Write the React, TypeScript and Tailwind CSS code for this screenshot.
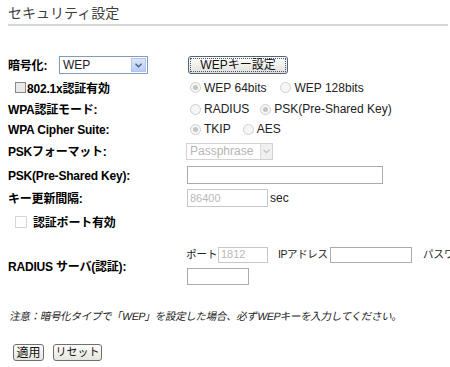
import React from "react";

const FONT = "font-['Liberation_Sans','Noto_Sans_CJK_JP',sans-serif]";

function Radio({ checked, label }: { checked?: boolean; label: string }) {
  return (
    <span className="flex items-center">
      <span className="w-[11px] h-[11px] rounded-full border border-[#cfcfcf] bg-[#f6f6f6] flex items-center justify-center">
        {checked && <span className="w-[5px] h-[5px] rounded-full bg-[#c4c4c4]" />}
      </span>
      <span className="ml-[3px] text-[12px] text-[#222]">{label}</span>
    </span>
  );
}

function Check({ faded }: { faded?: boolean }) {
  return (
    <span
      className={
        faded
          ? "w-[12px] h-[12px] border border-[#d6d6d6] bg-white"
          : "w-[11px] h-[11px] border border-[#8a8a8a] bg-[#e9e9e9]"
      }
    />
  );
}

function Arrow({ disabled }: { disabled?: boolean }) {
  return (
    <span
      className={
        disabled
          ? "w-[12px] h-full border-l border-[#dcdcdc] bg-[#f0f0f0] flex items-center justify-center"
          : "w-[15px] h-full bg-gradient-to-b from-[#dbe6fb] to-[#b7cbf4] border border-[#b0c4ec] flex items-center justify-center"
      }
    >
      <svg width="7" height="5" viewBox="0 0 7 5">
        <path d="M0.5 0.8 L3.5 3.8 L6.5 0.8" fill="none" stroke={disabled ? "#c8c8c8" : "#4d6185"} strokeWidth="1.4" />
      </svg>
    </span>
  );
}

function Label({ children }: { children: React.ReactNode }) {
  return <span className="text-[12px] font-bold text-black tracking-[-0.2px] whitespace-nowrap">{children}</span>;
}

export default function App() {
  return (
    <div className={`w-[450px] h-[367px] overflow-hidden bg-white ${FONT}`}>
      <div className="pl-[8px] pt-[3px] h-[24px] text-[14px] leading-[20px] text-[#3c3c3c]">セキュリティ設定</div>
      <div className="ml-[8px] w-[440px] h-[2px] bg-[#d6d6d6]" />

      <div className="mt-[28px] pl-[8px]">
        {/* 暗号化 */}
        <div className="flex items-center h-[22px]">
          <div className="w-[178px] shrink-0 flex items-center">
            <span className="w-[51px] shrink-0">
              <Label>暗号化:</Label>
            </span>
            <span className="w-[89px] h-[18px] border border-[#7f9db9] flex items-center justify-between pl-[3px] p-[1px]">
              <span className="text-[12px] text-[#222]">WEP</span>
              <Arrow />
            </span>
          </div>
          <button className="ml-[2px] w-[100px] h-[18px] rounded-[3px] border border-[#4f6282] bg-gradient-to-b from-white to-[#e2e2da] p-[1px]">
            <span className="w-full h-full flex items-center justify-center border border-dotted border-[#555] text-[12px] text-[#111]">
              WEPキー設定
            </span>
          </button>
        </div>

        {/* 802.1x */}
        <div className="flex items-center h-[23px]">
          <div className="w-[178px] shrink-0 flex items-center pl-[7px]">
            <Check />
            <span className="ml-[1px]">
              <Label>802.1x認証有効</Label>
            </span>
          </div>
          <div className="flex items-center gap-[14px] ml-[4px]">
            <Radio checked label="WEP 64bits" />
            <Radio label="WEP 128bits" />
          </div>
        </div>

        {/* WPA認証モード */}
        <div className="flex items-center h-[20px]">
          <div className="w-[178px] shrink-0">
            <Label>WPA認証モード:</Label>
          </div>
          <div className="flex items-center gap-[11px] ml-[4px]">
            <Radio label="RADIUS" />
            <Radio checked label="PSK(Pre-Shared Key)" />
          </div>
        </div>

        {/* Cipher */}
        <div className="flex items-center h-[20px]">
          <div className="w-[178px] shrink-0">
            <Label>WPA Cipher Suite:</Label>
          </div>
          <div className="flex items-center gap-[12px] ml-[4px]">
            <Radio checked label="TKIP" />
            <Radio label="AES" />
          </div>
        </div>

        {/* PSK format */}
        <div className="flex items-center h-[24px]">
          <div className="w-[178px] shrink-0">
            <Label>PSKフォーマット:</Label>
          </div>
          <span className="w-[87px] h-[17px] border border-[#d2d2d2] flex items-center justify-between pl-[3px]">
            <span className="text-[12px] text-[#b5b5b5]">Passphrase</span>
            <Arrow disabled />
          </span>
        </div>

        {/* PSK */}
        <div className="flex items-center h-[23px]">
          <div className="w-[178px] shrink-0">
            <Label>PSK(Pre-Shared Key):</Label>
          </div>
          <span className="ml-[1px] w-[196px] h-[18px] border border-[#a5acb2] bg-white" />
        </div>

        {/* キー更新間隔 */}
        <div className="flex items-center h-[24px]">
          <div className="w-[178px] shrink-0">
            <Label>キー更新間隔:</Label>
          </div>
          <span className="ml-[1px] w-[81px] h-[18px] border border-[#c4c8cc] bg-white flex items-center pl-[2px] text-[11px] text-[#b8b8b8]">
            86400
          </span>
          <span className="ml-[2px] text-[12px] text-[#222]">sec</span>
        </div>

        {/* 認証ポート */}
        <div className="flex items-center h-[24px]">
          <div className="w-[178px] shrink-0 flex items-center pl-[7px]">
            <Check faded />
            <span className="ml-[6px]">
              <Label>認証ポート有効</Label>
            </span>
          </div>
        </div>

        {/* RADIUS */}
        <div className="flex items-center h-[45px] mt-[9px]">
          <div className="w-[178px] shrink-0">
            <Label>RADIUS サーバ(認証):</Label>
          </div>
          <div className="flex flex-col gap-[5px] whitespace-nowrap">
            <div className="flex items-center h-[16px] text-[10.5px] text-[#222]">
              <span className="w-[32px] shrink-0">ポート</span>
              <span className="w-[50px] shrink-0 h-[16px] border border-[#c4c8cc] flex items-center pl-[2px] text-[11px] text-[#b8b8b8]">
                1812
              </span>
              <span className="ml-[10px] w-[52px] shrink-0 tracking-[-0.4px]">IPアドレス</span>
              <span className="w-[82px] shrink-0 h-[16px] border border-[#a5acb2]" />
              <span className="ml-[11px]">パスワード</span>
            </div>
            <span className="ml-[1px] w-[62px] h-[17px] border border-[#a5acb2]" />
          </div>
        </div>

        {/* note */}
        <div className="mt-[22px] h-[14px] flex items-center pl-[2px]">
          <span className="inline-block -skew-x-12 text-[10.5px] text-[#222] tracking-[-0.3px] whitespace-nowrap">
            注意：暗号化タイプで「WEP」を設定した場合、必ずWEPキーを入力してください。
          </span>
        </div>

        {/* buttons */}
        <div className="mt-[20px] flex items-center gap-[9px] pl-[5px]">
          <button className="w-[31px] h-[17px] rounded-[3px] border border-[#6f6f6f] bg-gradient-to-b from-[#fdfdfd] to-[#e6e6de] text-[12px] leading-none text-[#111] whitespace-nowrap">
            適用
          </button>
          <button className="w-[49px] h-[17px] rounded-[3px] border border-[#6f6f6f] bg-gradient-to-b from-[#fdfdfd] to-[#e6e6de] text-[11px] leading-none text-[#111] whitespace-nowrap">
            リセット
          </button>
        </div>
      </div>
    </div>
  );
}
